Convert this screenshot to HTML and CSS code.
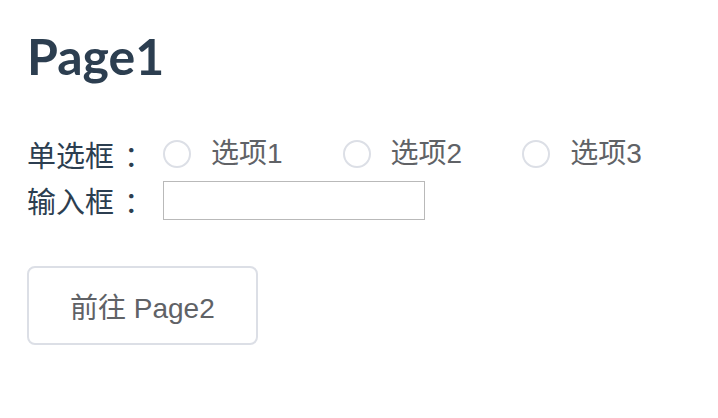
FILE: index.html
```html
<!DOCTYPE html>
<html lang="zh-CN">
<head>
<meta charset="utf-8">
<title>Page1</title>
<link rel="stylesheet" href="styles.css">
</head>
<body>
<div class="page">
  <h1 class="title">Page1</h1>
  <div class="row">
    <span class="label">单选框<span class="colon">：</span></span>
    <div class="radio-group">
      <label class="radio"><span class="radio-circle"></span><span class="radio-text">选项1</span></label>
      <label class="radio"><span class="radio-circle"></span><span class="radio-text">选项2</span></label>
      <label class="radio"><span class="radio-circle"></span><span class="radio-text">选项3</span></label>
    </div>
  </div>
  <div class="row">
    <span class="label">输入框<span class="colon">：</span></span>
    <input class="text-input" type="text">
  </div>
  <button class="btn" type="button">前往 Page2</button>
</div>
</body>
</html>
```

FILE: styles.css
```css
html, body {
  margin: 0;
  padding: 0;
  background: #ffffff;
}

.page {
  padding: 22px 27px 0;
  font-family: "Lato", "Noto Sans CJK SC", sans-serif;
  color: #2c3e50;
}

.title {
  margin: 0 0 41px;
  font-family: "Lato", "Noto Sans CJK SC", sans-serif;
  font-weight: 700;
  font-size: 50px;
  line-height: 68px;
  color: #2c3e50;
}

.row {
  display: flex;
  align-items: center;
  height: 46px;
}

.label {
  width: 136px;
  flex: none;
  font-family: "Noto Sans CJK SC", sans-serif;
  font-size: 29px;
  line-height: 46px;
  color: #2c3e50;
  white-space: nowrap;
}

.colon {
  padding-left: 10px;
}

.radio-group {
  display: flex;
  align-items: center;
}

.radio {
  display: flex;
  align-items: center;
  flex: none;
  margin-right: 60px;
  white-space: nowrap;
  cursor: pointer;
}

.radio-circle {
  box-sizing: border-box;
  flex: none;
  width: 28px;
  height: 28px;
  border: 2px solid #dcdfe6;
  border-radius: 50%;
  background: #ffffff;
}

.radio-text {
  padding-left: 20px;
  font-family: "Liberation Sans", "Noto Sans CJK SC", sans-serif;
  font-size: 28px;
  line-height: 40px;
  color: #606266;
}

.text-input {
  box-sizing: border-box;
  width: 262px;
  height: 39px;
  margin: 0;
  padding: 0 6px;
  border: 1px solid #b9b9b9;
  border-radius: 0;
  outline: none;
  font-size: 24px;
}

.btn {
  box-sizing: border-box;
  display: block;
  margin-top: 43px;
  height: 79px;
  padding: 0 41px;
  border: 2px solid #dcdfe6;
  border-radius: 8px;
  background: #ffffff;
  font-family: "Liberation Sans", "Noto Sans CJK SC", sans-serif;
  font-size: 28px;
  color: #606266;
  cursor: pointer;
}
```
